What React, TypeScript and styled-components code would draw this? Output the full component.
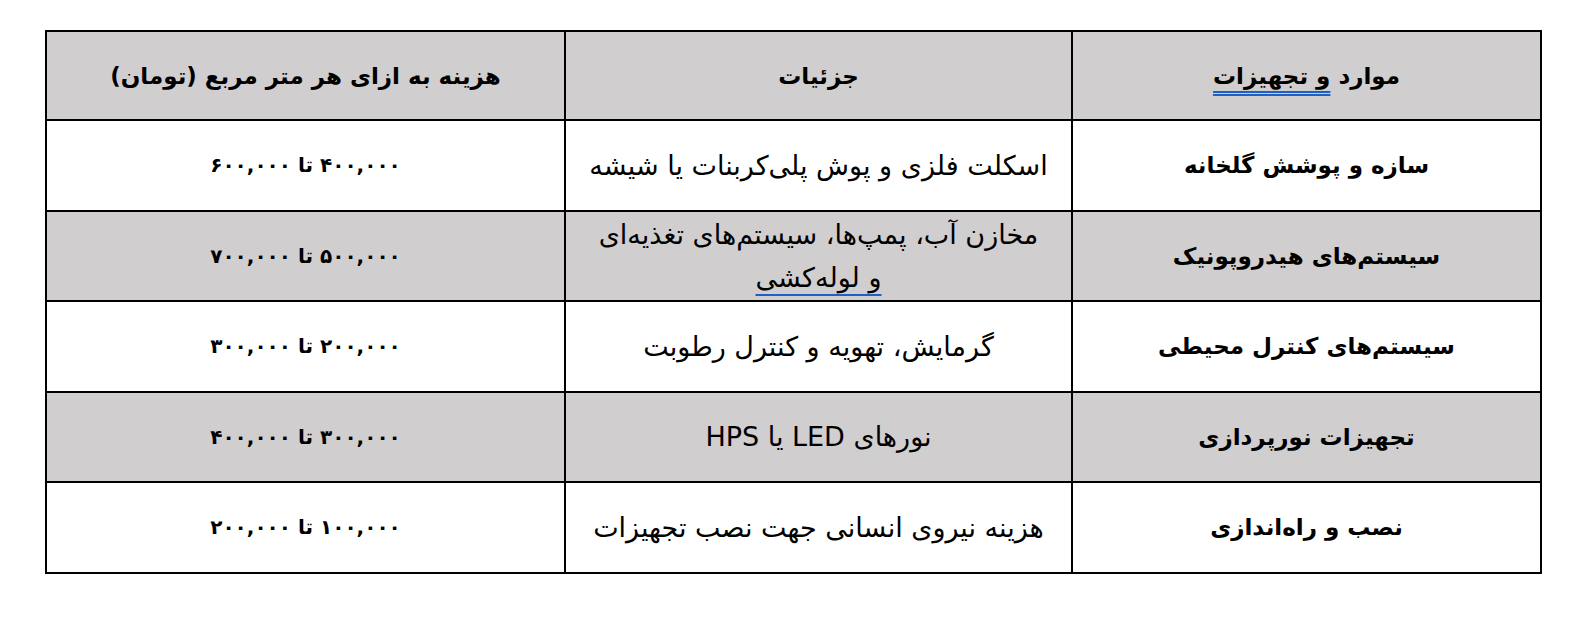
import styled, { createGlobalStyle } from "styled-components";

const GlobalStyle = createGlobalStyle`
  body {
    margin: 0;
    background: #ffffff;
    font-family: "DejaVu Sans", "Noto Sans", sans-serif;
    color: #000;
  }
`;

type Row = {
  item: string;
  detail: React.ReactNode;
  cost: string;
};

const rows: Row[] = [
  {
    item: "سازه و پوشش گلخانه",
    detail: "اسکلت فلزی و پوش پلی‌کربنات یا شیشه",
    cost: "۴۰۰,۰۰۰ تا ۶۰۰,۰۰۰",
  },
  {
    item: "سیستم‌های هیدروپونیک",
    detail: (
      <>
        مخازن آب، پمپ‌ها، سیستم‌های تغذیه‌ای
        <br />
        <Marked>و لوله‌کشی</Marked>
      </>
    ),
    cost: "۵۰۰,۰۰۰ تا ۷۰۰,۰۰۰",
  },
  {
    item: "سیستم‌های کنترل محیطی",
    detail: "گرمایش، تهویه و کنترل رطوبت",
    cost: "۲۰۰,۰۰۰ تا ۳۰۰,۰۰۰",
  },
  {
    item: "تجهیزات نورپردازی",
    detail: "نورهای LED یا HPS",
    cost: "۳۰۰,۰۰۰ تا ۴۰۰,۰۰۰",
  },
  {
    item: "نصب و راه‌اندازی",
    detail: "هزینه نیروی انسانی جهت نصب تجهیزات",
    cost: "۱۰۰,۰۰۰ تا ۲۰۰,۰۰۰",
  },
];

function Marked({ children, double }: { children: React.ReactNode; double?: boolean }) {
  return <Squiggle $double={double}>{children}</Squiggle>;
}

export default function App() {
  return (
    <>
      <GlobalStyle />
      <Page>
        <Table dir="rtl">
          <colgroup>
            <col style={{ width: 469 }} />
            <col style={{ width: 507 }} />
            <col />
          </colgroup>
          <thead>
            <tr>
              <HeadCell>
                موارد <Marked double>و تجهیزات</Marked>
              </HeadCell>
              <HeadCell>جزئیات</HeadCell>
              <HeadCell>هزینه به ازای هر متر مربع (تومان)</HeadCell>
            </tr>
          </thead>
          <tbody>
            {rows.map((r, i) => (
              <tr key={i}>
                <ItemCell $shaded={i % 2 === 1}>{r.item}</ItemCell>
                <DetailCell $shaded={i % 2 === 1}>{r.detail}</DetailCell>
                <CostCell $shaded={i % 2 === 1}>{r.cost}</CostCell>
              </tr>
            ))}
          </tbody>
        </Table>
      </Page>
    </>
  );
}

const Page = styled.div`
  padding: 30px 38px 0 45px;
`;

const Table = styled.table`
  width: 1497px;
  border-collapse: collapse;
  table-layout: fixed;
`;

const BaseCell = styled.td<{ $shaded?: boolean }>`
  border: 2px solid #000;
  height: 88.5px;
  padding: 0 10px;
  text-align: center;
  vertical-align: middle;
  background: ${(p) => (p.$shaded ? "#d0cecf" : "#ffffff")};
  line-height: 1.5;
`;

const HeadCell = styled.th`
  border: 2px solid #000;
  height: 87px;
  padding: 0 10px;
  text-align: center;
  vertical-align: middle;
  background: #d0cecf;
  font-size: 23px;
  font-weight: bold;
`;

const ItemCell = styled(BaseCell)`
  font-size: 23px;
  font-weight: bold;
`;

const DetailCell = styled(BaseCell)`
  font-size: 27px;
  line-height: 43px;
`;

const CostCell = styled(BaseCell)`
  font-size: 20px;
  font-weight: 600;
`;

const Squiggle = styled.span<{ $double?: boolean }>`
  text-decoration: underline;
  text-decoration-style: ${(p) => (p.$double ? "double" : "solid")};
  text-decoration-color: #1f5fc6;
  text-underline-offset: 7px;
`;
